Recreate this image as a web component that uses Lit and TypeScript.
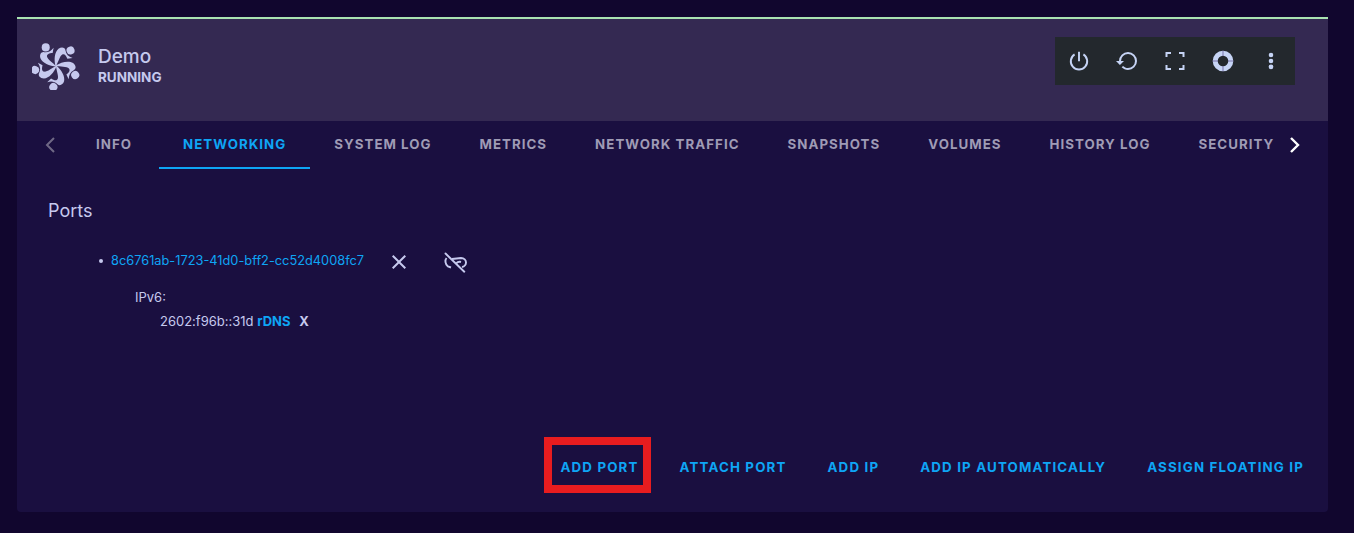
import { LitElement, html, css, svg } from "lit";
import { customElement } from "lit/decorators.js";

const P = {
  restore: "M13,3A9,9 0 0,0 4,12H1L4.89,15.89L4.96,16.03L9,12H6A7,7 0 0,1 13,5A7,7 0 0,1 20,12A7,7 0 0,1 13,19C11.07,19 9.32,18.21 8.06,16.94L6.64,18.36C8.27,20 10.5,21 13,21A9,9 0 0,0 22,12A9,9 0 0,0 13,3Z",
  dots: "M12,15.5A2.3,2.3 0 0,1 14.3,18A2.3,2.3 0 0,1 12,20.3A2.3,2.3 0 0,1 9.7,18A2.3,2.3 0 0,1 12,15.5M12,9.7A2.3,2.3 0 0,1 14.3,12A2.3,2.3 0 0,1 12,14.3A2.3,2.3 0 0,1 9.7,12A2.3,2.3 0 0,1 12,9.7M12,3.7A2.3,2.3 0 0,1 14.3,6A2.3,2.3 0 0,1 12,8.3A2.3,2.3 0 0,1 9.7,6A2.3,2.3 0 0,1 12,3.7Z",
  close: "M19,6.41L17.59,5L12,10.59L6.41,5L5,6.41L10.59,12L5,17.59L6.41,19L12,13.41L17.59,19L19,17.59L13.41,12L19,6.41Z",
};

const icon = (d: string) => html`<svg viewBox="0 0 24 24" width="24" height="24" fill="currentColor"><path d=${d}></path></svg>`;

const power = html`<svg viewBox="0 0 24 24" width="24" height="24" fill="none" stroke="currentColor" stroke-width="1.9">
  <path d="M7.6 5.4A8.2 8.2 0 1 0 16.4 5.4"></path>
  <path d="M12 2.8V12.2"></path>
</svg>`;

const full = html`<svg viewBox="0 0 24 24" width="24" height="24" fill="none" stroke="currentColor" stroke-width="2">
  <path d="M3.5 8V4H8M16 4H20.5V8M20.5 16V20H16M8 20H3.5V16"></path>
</svg>`;

const lifebuoy = html`<svg viewBox="0 0 24 24" width="24" height="24">
  <circle cx="12" cy="12" r="7.8" fill="none" stroke="currentColor" stroke-width="5"></circle>
  <path d="M12 1.5V7M12 17V22.5M1.5 12H7M17 12H22.5" stroke="#5a4a8c" stroke-width="0.7"></path>
</svg>`;

const linkOff = html`<svg viewBox="0 0 24 24" width="24" height="24" fill="none" stroke="currentColor" stroke-width="1.9">
  <path d="M2.5 3.5L21.3 21.7" stroke-linecap="round"></path>
  <path d="M3.5 8C1.8 10 2 14 5 16.5L8 17.5"></path>
  <path d="M9 9L18 8C21 8 23.2 10 23 12.8C22.8 15 21 16.6 19 17"></path>
  <path d="M13 13.5C14.5 12 16.5 11.5 18 12"></path>
</svg>`;

const figure = svg`
  <circle cx="14.3" cy="5.6" r="4.2"></circle>
  <path d="M22.5 6L21.5 11.4C17.8 11.6 15.4 12.6 15.6 15C16 18 22 21.4 25.6 25.6C18 25.2 10.8 22 8.8 17C7.6 13.2 9.6 10 12.6 10.6C16.5 11.2 19.6 9.6 22.5 6Z"></path>`;

const logo = html`<svg viewBox="0 0 50 50" width="48" height="48" fill="currentColor">
  ${[0, 72, 144, 216, 288].map((a) => svg`<g transform="rotate(${a} 25 25)">${figure}</g>`)}
</svg>`;

const TABS = ["Info", "Networking", "System Log", "Metrics", "Network Traffic", "Snapshots", "Volumes", "History Log", "Security"];
const ACTIONS = ["Add Port", "Attach Port", "Add IP", "Add IP Automatically", "Assign Floating IP"];

@customElement("app-root")
export class AppRoot extends LitElement {
  static styles = css`
    :host {
      display: block;
      height: 533px;
      overflow: hidden;
      background: #11062e;
      font-family: Inter, "Liberation Sans", sans-serif;
      color: #c6c9ee;
    }
    .card {
      margin: 17px 26px 0 17px;
      height: 495px;
      display: flex;
      flex-direction: column;
      background: #1a0f40;
      border-top: 2px solid #a9e2b1;
      border-radius: 0 0 4px 4px;
      box-sizing: border-box;
    }
    .head {
      height: 102px;
      flex: none;
      background: #342952;
      display: flex;
      align-items: flex-start;
      box-sizing: border-box;
      padding: 0 33px 0 15px;
    }
    .logo {
      margin: 23px 18px 0 0;
      height: 48px;
      color: #c6c9ee;
    }
    .title {
      margin-top: 27px;
      flex: 1;
    }
    .name {
      font-size: 19px;
      line-height: 22px;
      font-weight: 500;
    }
    .state {
      font-size: 13.5px;
      line-height: 16px;
      font-weight: 700;
      margin-top: 1px;
    }
    .tools {
      display: flex;
      margin-top: 18px;
      background: #23282d;
    }
    .tool {
      width: 48px;
      height: 48px;
      display: flex;
      align-items: center;
      justify-content: center;
      color: #c6d4f5;
    }
    .tabs {
      height: 48px;
      flex: none;
      display: flex;
    }
    .arrow {
      flex: none;
      display: flex;
      align-items: center;
      justify-content: center;
    }
    .prev {
      width: 39px;
      padding-left: 13px;
      color: #6f6885;
    }
    .next {
      width: 40px;
      margin-right: 13px;
      color: #fff;
    }
    .strip {
      flex: 1;
      display: flex;
      overflow: hidden;
      min-width: 0;
    }
    .tab {
      flex: none;
      min-width: 90px;
      padding: 0 24px;
      box-sizing: border-box;
      display: flex;
      align-items: center;
      justify-content: center;
      font-size: 13.3px;
      font-weight: 700;
      letter-spacing: 1.03px;
      text-transform: uppercase;
      color: #9f9bb5;
      border-bottom: 2px solid transparent;
    }
    .tab.on {
      color: #0ea5f5;
      border-bottom-color: #0ea5f5;
    }
    .panel {
      flex: 1;
      padding: 0 30px;
    }
    h2 {
      margin: 31px 0 0 1px;
      font-size: 18px;
      line-height: 22px;
      font-weight: 400;
    }
    .list {
      margin: 28px 0 0 52px;
      font-size: 13px;
    }
    .port {
      display: flex;
      align-items: center;
      height: 24px;
      font-size: 12.8px;
      color: #0ea5f5;
    }
    .id {
      padding-bottom: 4px;
    }
    .dot {
      width: 4px;
      height: 4px;
      border-radius: 50%;
      background: #c6c9ee;
      margin: 0 8px 2px 0;
    }
    .btn {
      display: flex;
      color: #c6c9ee;
    }
    .close {
      margin-left: 23px;
    }
    .unlink {
      margin-left: 32px;
    }
    .ip {
      margin: 15px 0 0 36px;
      line-height: 16px;
    }
    .addr {
      margin: 8px 0 0 61px;
      line-height: 16px;
    }
    .addr b {
      font-weight: 700;
      color: #0ea5f5;
    }
    .addr i {
      font-style: normal;
      font-weight: 700;
      margin-left: 5px;
    }
    .actions {
      flex: none;
      display: flex;
      justify-content: flex-end;
      gap: 9px;
      padding: 0 8px 27px 0;
    }
    .act {
      position: relative;
      height: 36px;
      padding: 0 16px;
      display: flex;
      align-items: center;
      font-size: 13.3px;
      font-weight: 700;
      letter-spacing: 1.17px;
      text-transform: uppercase;
      color: #0ea5f5;
    }
    .mark {
      position: absolute;
      left: 0;
      top: -12px;
      width: 107px;
      height: 56px;
      box-sizing: border-box;
      border: 8px solid #e81c1f;
    }
  `;

  render() {
    return html`<div class="card">
      <header class="head">
        <div class="logo">${logo}</div>
        <div class="title">
          <div class="name">Demo</div>
          <div class="state">RUNNING</div>
        </div>
        <div class="tools">
          <span class="tool">${power}</span>
          <span class="tool">${icon(P.restore)}</span>
          <span class="tool">${full}</span>
          <span class="tool">${lifebuoy}</span>
          <span class="tool">${icon(P.dots)}</span>
        </div>
      </header>
      <nav class="tabs">
        <span class="arrow prev"><svg viewBox="0 0 24 24" width="24" height="24" fill="none" stroke="currentColor" stroke-width="2"><path d="M16 5L9 12L16 19"></path></svg></span>
        <div class="strip">
          ${TABS.map((t, i) => html`<span class="tab ${i === 1 ? "on" : ""}">${t}</span>`)}
        </div>
        <span class="arrow next"><svg viewBox="0 0 24 24" width="24" height="24" fill="none" stroke="currentColor" stroke-width="2.4"><path d="M8 5L15 12L8 19"></path></svg></span>
      </nav>
      <section class="panel">
        <h2>Ports</h2>
        <div class="list">
          <div class="port">
            <span class="dot"></span>
            <span class="id">8c6761ab-1723-41d0-bff2-cc52d4008fc7</span>
            <span class="btn close">${icon(P.close)}</span>
            <span class="btn unlink">${linkOff}</span>
          </div>
          <div class="ip">IPv6:</div>
          <div class="addr">2602:f96b::31d <b>rDNS</b> <i>X</i></div>
        </div>
      </section>
      <footer class="actions">
        ${ACTIONS.map((a, i) => html`<span class="act">${a}${i === 0 ? html`<span class="mark"></span>` : ""}</span>`)}
      </footer>
    </div>`;
  }
}
